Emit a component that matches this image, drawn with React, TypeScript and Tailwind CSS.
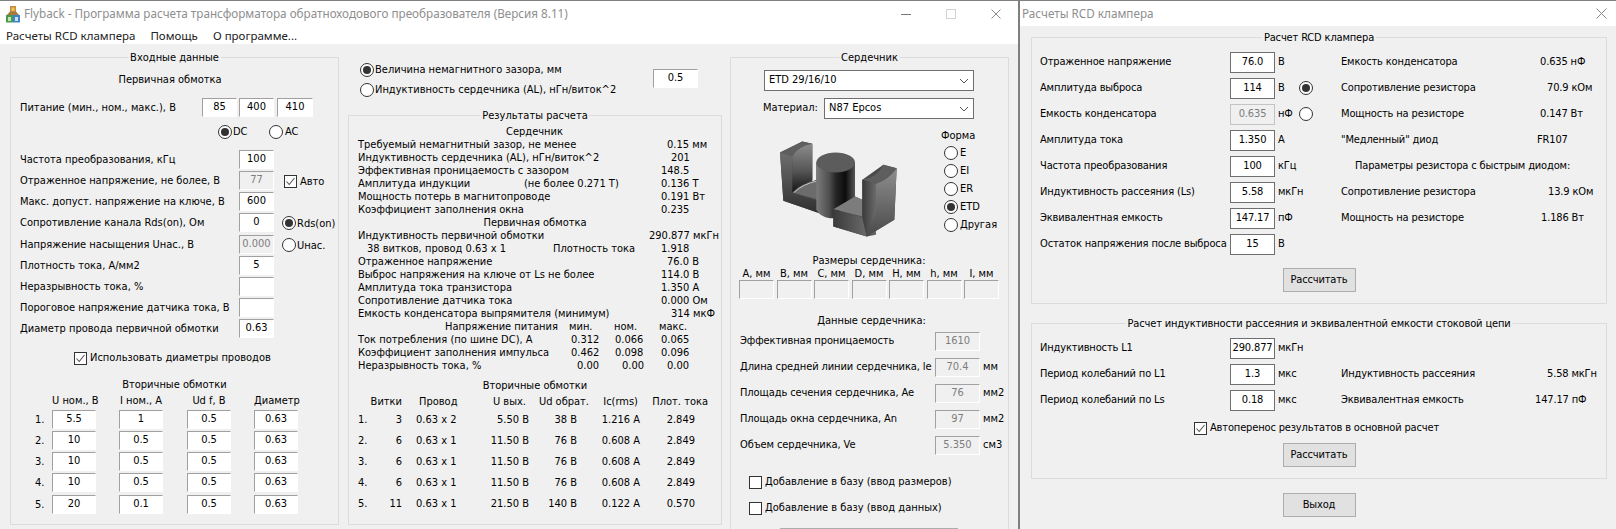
import { ReactNode } from "react";

const font = { fontFamily: '"DejaVu Sans Condensed", "Liberation Sans", Arial, sans-serif' };
const chromeFont = { fontFamily: '"Noto Sans", "Liberation Sans", Arial, sans-serif' };

const Field = ({ value = "", w = "w-[35px]", disabled = false, className = "" }: { value?: string; w?: string; disabled?: boolean; className?: string }) => (
  <div
    className={`${w} h-[19px] shrink-0 border-t border-l border-t-[#a0a0a0] border-l-[#a0a0a0] border-r border-b border-r-white border-b-white flex items-center justify-center ${
      disabled ? "bg-[#f0f0f0] text-[#7d7d7d]" : "bg-white"
    } ${className}`}
  >
    {value}
  </div>
);

const BoxField = ({ value, disabled = false }: { value: string; disabled?: boolean }) => (
  <div
    className={`w-[45px] h-[21px] shrink-0 border flex items-center justify-center overflow-hidden whitespace-nowrap ${
      disabled ? "border-[#c4c4c4] bg-[#f0f0f0] text-[#7d7d7d]" : "border-[#6f6f6f] bg-white"
    }`}
  >
    {value}
  </div>
);

const Radio = ({ on = false, className = "" }: { on?: boolean; className?: string }) => (
  <span className={`w-[14px] h-[14px] shrink-0 rounded-full border border-[#333] bg-white flex items-center justify-center ${className}`}>
    {on && <span className="w-[8px] h-[8px] rounded-full bg-[#333]" />}
  </span>
);

const Check = ({ on = false, className = "" }: { on?: boolean; className?: string }) => (
  <span className={`w-[13px] h-[13px] shrink-0 border border-[#333] bg-white flex items-center justify-center ${className}`}>
    {on && (
      <svg width="11" height="11" viewBox="0 0 11 11" fill="none" stroke="#555" strokeWidth="1.1">
        <path d="M1.5 5.5 L4.2 8.5 L9.5 2" />
      </svg>
    )}
  </span>
);

const Group = ({ title, className = "", children }: { title: string; className?: string; children: ReactNode }) => (
  <div className={`relative border border-[#dcdcdc] ${className}`}>
    <div className="absolute -top-[7px] left-1/2 -translate-x-1/2 bg-[#f0f0f0] px-[2px] whitespace-nowrap leading-[14px]">{title}</div>
    {children}
  </div>
);

const Combo = ({ value, w }: { value: string; w: string }) => (
  <div className={`${w} h-[21px] border border-[#6f6f6f] bg-white flex items-center justify-between pl-[4px] pr-[4px]`}>
    <span>{value}</span>
    <svg width="10" height="6" viewBox="0 0 10 6" fill="none" stroke="#555" strokeWidth="1">
      <path d="M1 1 L5 5 L9 1" />
    </svg>
  </div>
);

const Button = ({ label }: { label: string }) => (
  <div className="mx-auto w-[73px] h-[24px] bg-[#e1e1e1] border border-[#adadad] flex items-center justify-center">{label}</div>
);

const AppIcon = () => (
  <svg width="16" height="18" viewBox="0 0 16 18" className="shrink-0">
    <rect x="5" y="1" width="6" height="7" fill="#c98a3a" />
    <rect x="6.5" y="2.5" width="3" height="3.5" fill="#e8c46a" />
    <path d="M1 11 L5 6.5 H11 L15 11 Z" fill="#a8793f" />
    <rect x="1" y="10" width="7" height="7.5" fill="#4d9a4a" />
    <rect x="8" y="10" width="7" height="7.5" fill="#3f83c9" />
    <rect x="3" y="12" width="3" height="4" fill="#bfe6b5" />
    <rect x="10" y="12" width="3" height="4" fill="#c7e2f7" />
  </svg>
);

const CorePicture = () => (
  <svg width="150" height="117" viewBox="132 388 450 350">
    <defs>
      <linearGradient id="leftFront" x1="0" y1="0" x2="0" y2="1">
        <stop offset="0" stopColor="#6e6e6e" />
        <stop offset="0.6" stopColor="#484848" />
        <stop offset="1" stopColor="#303030" />
      </linearGradient>
      <linearGradient id="leftInner" x1="0" y1="0" x2="0" y2="1">
        <stop offset="0" stopColor="#8c8c8c" />
        <stop offset="0.55" stopColor="#565656" />
        <stop offset="1" stopColor="#141414" />
      </linearGradient>
      <linearGradient id="post" x1="0" y1="0" x2="1" y2="0">
        <stop offset="0" stopColor="#7c7c7c" />
        <stop offset="0.35" stopColor="#4c4c4c" />
        <stop offset="0.5" stopColor="#262626" />
        <stop offset="0.75" stopColor="#0c0c0c" />
        <stop offset="1" stopColor="#555" />
      </linearGradient>
      <linearGradient id="rightSide" x1="0" y1="0" x2="0" y2="1">
        <stop offset="0" stopColor="#8e8e8e" />
        <stop offset="1" stopColor="#4a4a4a" />
      </linearGradient>
      <linearGradient id="band" x1="0" y1="0" x2="1" y2="0">
        <stop offset="0" stopColor="#3a3a3a" />
        <stop offset="1" stopColor="#6a6a6a" />
      </linearGradient>
    </defs>
    <path d="M180 458 L247 425 L277 432 V545 L289 540 V488 H405 V590 L427 600 V540 L490 495 L530 505 L523 660 L440 710 L340 680 V655 L300 640 L190 603 Z" fill="#4a4a4a" />
    <path d="M180 458 L247 425 L277 432 Q232 440 217 470 Z" fill="#5e5e5e" />
    <path d="M180 458 L217 470 V578 L298 606 V640 L190 603 Z" fill="url(#leftFront)" />
    <path d="M217 470 Q232 440 277 432 V540 L217 578 Z" fill="url(#leftInner)" />
    <path d="M217 578 Q245 548 290 544 L296 600 Z" fill="#6c6c6c" />
    <path d="M222 578 Q250 552 290 544" fill="none" stroke="#c4c4c4" strokeWidth="3" />
    <path d="M289 488 V630 Q300 652 330 655 L340 655 V640 Q400 625 405 590 V488 Z" fill="url(#post)" />
    <ellipse cx="347" cy="488" rx="58" ry="30" fill="#5c5c5c" />
    <path d="M340 628 L405 590 L427 600 V650 Z" fill="#7c7c7c" />
    <path d="M340 628 L427 652 L440 710 L340 680 Z" fill="url(#band)" />
    <path d="M427 540 Q470 535 490 495 L530 505 Q505 540 468 552 Z" fill="#5e5e5e" />
    <path d="M427 540 L468 552 V705 L440 710 L427 652 Z" fill="url(#band)" />
    <path d="M468 552 Q505 540 530 505 L523 660 L440 710 L468 640 Z" fill="url(#rightSide)" />
  </svg>
);

const LeftRow = ({ label, value, disabled, children }: { label: string; value?: string; disabled?: boolean; children?: ReactNode }) => (
  <div className="h-[21px] flex pl-[9px]">
    <div className="w-[219px] h-[19px] pt-[2px] flex items-center whitespace-nowrap">{label}</div>
    <Field value={value} disabled={disabled} />
    {children}
  </div>
);

const secondaryInputs = [
  ["5.5", "1", "0.5", "0.63"],
  ["10", "0.5", "0.5", "0.63"],
  ["10", "0.5", "0.5", "0.63"],
  ["10", "0.5", "0.5", "0.63"],
  ["20", "0.1", "0.5", "0.63"],
];

const InputPanel = () => (
  <Group title="Входные данные" className="w-[329px] h-[468px] shrink-0">
    <div className="pt-[14px] h-[29px] text-center leading-[16px] pr-[9px]">Первичная обмотка</div>
    <div className="mt-[11px] h-[19px] flex pl-[9px]">
      <div className="w-[182px] pt-[2px] flex items-center whitespace-nowrap">Питание (мин., ном., макс.), В</div>
      <Field value="85" />
      <Field value="400" className="ml-[2px]" />
      <Field value="410" w="w-[36px]" className="ml-[3px]" />
    </div>
    <div className="mt-[8px] h-[14px] flex items-center pl-[207px]">
      <Radio on />
      <span className="ml-[1px] w-[36px]">DC</span>
      <Radio />
      <span className="ml-[2px]">AC</span>
    </div>
    <div className="mt-[11px]">
      <LeftRow label="Частота преобразования, кГц" value="100" />
      <LeftRow label="Отраженное напряжение, не более, В" value="77" disabled>
        <Check on className="ml-[10px] mt-[4px]" />
        <span className="ml-[3px] mt-[3px]">Авто</span>
      </LeftRow>
      <LeftRow label="Макс. допуст. напряжение на ключе, В" value="600" />
      <LeftRow label="Сопротивление канала Rds(on), Ом" value="0">
        <Radio on className="ml-[8px] mt-[3px]" />
        <span className="ml-[1px] mt-[3px]">Rds(on)</span>
      </LeftRow>
      <div className="h-[1px]" />
      <LeftRow label="Напряжение насыщения Uнас., В" value="0.000" disabled>
        <Radio className="ml-[8px] mt-[3px]" />
        <span className="ml-[1px] mt-[3px]">Uнас.</span>
      </LeftRow>
      <LeftRow label="Плотность тока, А/мм2" value="5" />
      <LeftRow label="Неразрывность тока, %" />
      <LeftRow label="Пороговое напряжение датчика тока, В" />
      <LeftRow label="Диаметр провода первичной обмотки" value="0.63" />
    </div>
    <div className="mt-[10px] h-[16px] flex items-center pl-[63px]">
      <Check on />
      <span className="ml-[3px]">Использовать диаметры проводов</span>
    </div>
    <div className="mt-[12px] h-[14px] leading-[14px] text-center">Вторичные обмотки</div>
    <div className="mt-[2px] h-[14px] leading-[14px] flex pl-[41px] text-center whitespace-nowrap">
      <span className="w-[44px]">U ном., В</span>
      <span className="ml-[23px] w-[44px]">I ном., А</span>
      <span className="ml-[24px] w-[44px]">Ud f, В</span>
      <span className="ml-[23px] w-[44px]">Диаметр</span>
    </div>
    <div className="mt-[2px]">
      {secondaryInputs.map((row, i) => (
        <div key={i} className={`h-[21px] flex items-start pl-[24px] ${i === 4 ? "mt-[1px]" : ""}`}>
          <span className="w-[17px] h-[19px] pt-[2px] flex items-center">{i + 1}.</span>
          <Field value={row[0]} w="w-[44px]" />
          <Field value={row[1]} w="w-[44px]" className="ml-[23px]" />
          <Field value={row[2]} w="w-[44px]" className="ml-[24px]" />
          <Field value={row[3]} w="w-[44px]" className="ml-[23px]" />
        </div>
      ))}
    </div>
  </Group>
);

const Line = ({ children, value, offset = "" }: { children: ReactNode; value?: string; offset?: string }) => (
  <div className="h-[13px] leading-[13px] flex whitespace-nowrap pl-[9px]">
    <div className="w-[291px] flex">{children}</div>
    {value && <span className={offset}>{value}</span>}
  </div>
);

const Heading = ({ children, className = "" }: { children: ReactNode; className?: string }) => (
  <div className={`h-[13px] leading-[13px] text-center whitespace-nowrap ${className}`}>{children}</div>
);

const Triple = ({ label, a, b, c, tight = false }: { label: string; a: string; b: string; c: string; tight?: boolean }) => (
  <div className="h-[13px] leading-[13px] flex whitespace-nowrap pl-[9px]">
    <span className="w-[213px]">{label}</span>
    <span className={tight ? "w-[44px]" : "w-[45px] pl-[6px]"}>{a}</span>
    <span className={tight ? "w-[46px]" : "w-[45px] pl-[6px]"}>{b}</span>
    <span className={tight ? "" : "pl-[6px]"}>{c}</span>
  </div>
);

const secondaryResults = [
  ["3", "0.63 x 2", "5.50 В", "38 В", "1.216 А", "2.849"],
  ["6", "0.63 x 1", "11.50 В", "76 В", "0.608 А", "2.849"],
  ["6", "0.63 x 1", "11.50 В", "76 В", "0.608 А", "2.849"],
  ["6", "0.63 x 1", "11.50 В", "76 В", "0.608 А", "2.849"],
  ["11", "0.63 x 1", "21.50 В", "140 В", "0.122 А", "0.570"],
];

const ResultsPanel = () => (
  <div className="w-[374px] shrink-0">
    <div className="h-[58px] flex pt-[6px]">
      <div className="w-[305px] pl-[12px] flex flex-col gap-[6px]">
        <div className="h-[14px] flex items-center"><Radio on /><span className="ml-[1px]">Величина немагнитного зазора, мм</span></div>
        <div className="h-[14px] flex items-center"><Radio /><span className="ml-[1px]">Индуктивность сердечника (AL), нГн/виток^2</span></div>
      </div>
      <Field value="0.5" w="w-[45px]" className="mt-[6px]" />
    </div>
    <Group title="Результаты расчета" className="h-[410px]">
      <div className="pt-[9px]">
        <Heading className="pr-[1px]">Сердечник</Heading>
        <Line value="0.15 мм" offset="ml-[18px]">Требуемый немагнитный зазор, не менее</Line>
        <Line value="201" offset="ml-[22px]">Индуктивность сердечника (AL), нГн/виток^2</Line>
        <Line value="148.5" offset="ml-[12px]">Эффективная проницаемость с зазором</Line>
        <Line value="0.136 Т" offset="ml-[12px]"><span className="w-[166px]">Амплитуда индукции</span><span>(не более 0.271 Т)</span></Line>
        <Line value="0.191 Вт" offset="ml-[12px]">Мощность потерь в магнитопроводе</Line>
        <Line value="0.235" offset="ml-[12px]">Коэффициент заполнения окна</Line>
        <Heading>Первичная обмотка</Heading>
        <Line value="290.877 мкГн">Индуктивность первичной обмотки</Line>
        <Line value="1.918" offset="ml-[12px]"><span className="pl-[9px] w-[195px]">38 витков, провод 0.63 x 1</span><span>Плотность тока</span></Line>
        <Line value="76.0 В" offset="ml-[18px]">Отраженное напряжение</Line>
        <Line value="114.0 В" offset="ml-[12px]">Выброс напряжения на ключе от Ls не более</Line>
        <Line value="1.350 А" offset="ml-[12px]">Амплитуда тока транзистора</Line>
        <Line value="0.000 Ом" offset="ml-[12px]">Сопротивление датчика тока</Line>
        <Line value="314 мкФ" offset="ml-[22px]">Емкость конденсатора выпрямителя (минимум)</Line>
        <div className="h-[13px] leading-[13px] flex whitespace-nowrap pl-[96px]">
          <span className="w-[124px]">Напряжение питания</span>
          <span className="w-[45px]">мин.</span>
          <span className="w-[45px]">ном.</span>
          <span>макс.</span>
        </div>
        <Triple tight label="Ток потребления (по шине DC), А" a="0.312" b="0.066" c="0.065" />
        <Triple tight label="Коэффициент заполнения импульса" a="0.462" b="0.098" c="0.096" />
        <Triple label="Неразрывность тока, %" a="0.00" b="0.00" c="0.00" />
      </div>
      <Heading className="mt-[7px]">Вторичные обмотки</Heading>
      <div className="mt-[3px] h-[13px] leading-[13px] flex whitespace-nowrap">
        <span className="w-[53px] text-right">Витки</span>
        <span className="ml-[17px] w-[60px]">Провод</span>
        <span className="w-[47px] text-right">U вых.</span>
        <span className="w-[63px] text-right">Ud обрат.</span>
        <span className="w-[49px] text-right">Ic(rms)</span>
        <span className="w-[70px] text-right">Плот. тока</span>
      </div>
      <div className="mt-[5px]">
        {secondaryResults.map((row, i) => (
          <div key={i} className="h-[21px] leading-[13px] flex whitespace-nowrap pl-[9px]">
            <span className="w-[20px]">{i + 1}.</span>
            <span className="w-[24px] text-right">{row[0]}</span>
            <span className="ml-[14px] w-[60px]">{row[1]}</span>
            <span className="w-[53px] text-right">{row[2]}</span>
            <span className="w-[48px] text-right">{row[3]}</span>
            <span className="w-[63px] text-right">{row[4]}</span>
            <span className="w-[55px] text-right">{row[5]}</span>
          </div>
        ))}
      </div>
    </Group>
  </div>
);

const shapes = [
  { label: "E" },
  { label: "EI" },
  { label: "ER" },
  { label: "ETD", on: true },
  { label: "Другая" },
];

const dimensions = ["A, мм", "B, мм", "C, мм", "D, мм", "H, мм", "h, мм", "I, мм"];

const coreData = [
  { label: "Эффективная проницаемость", value: "1610", unit: "" },
  { label: "Длина средней линии сердечника, le", value: "70.4", unit: "мм" },
  { label: "Площадь сечения сердечника, Ae", value: "76", unit: "мм2" },
  { label: "Площадь окна сердечника, An", value: "97", unit: "мм2" },
  { label: "Объем сердечника, Ve", value: "5.350", unit: "см3" },
];

const CorePanel = () => (
  <Group title="Сердечник" className="w-[279px] h-[500px] shrink-0">
    <div className="pt-[12px] pl-[33px]">
      <Combo value="ETD 29/16/10" w="w-[210px]" />
    </div>
    <div className="mt-[7px] flex items-center pl-[32px]">
      <span className="w-[61px] whitespace-nowrap">Материал:</span>
      <Combo value="N87 Epcos" w="w-[150px]" />
    </div>
    <div className="mt-[10px] h-[117px] flex pl-[33px]">
      <CorePicture />
      <div className="ml-[27px]">
        <div className="h-[14px] leading-[14px]">Форма</div>
        <div className="mt-[3px] flex flex-col gap-[4px] pl-[3px]">
          {shapes.map((s) => (
            <div key={s.label} className="h-[14px] flex items-center">
              <Radio on={s.on} />
              <span className="ml-[2px]">{s.label}</span>
            </div>
          ))}
        </div>
      </div>
    </div>
    <div className="mt-[8px] h-[14px] leading-[14px] text-center pr-[1px]">Размеры сердечника:</div>
    <div className="h-[13px] leading-[13px] flex pl-[8px] gap-[2.5px] -mt-[1px] text-center">
      {dimensions.map((d) => (
        <span key={d} className="w-[35px] whitespace-nowrap">{d}</span>
      ))}
    </div>
    <div className="flex pl-[8px] gap-[2.5px]">
      {dimensions.map((d) => (
        <Field key={d} disabled />
      ))}
    </div>
    <div className="mt-[15px] h-[14px] leading-[14px] text-center pl-[4px]">Данные сердечника:</div>
    <div className="mt-[4px] flex flex-col gap-[7px] pl-[9px]">
      {coreData.map((r) => (
        <div key={r.label} className="h-[19px] flex items-center whitespace-nowrap">
          <span className="w-[195px] tracking-[-0.1px]">{r.label}</span>
          <Field value={r.value} w="w-[45px]" disabled />
          <span className="ml-[3px]">{r.unit}</span>
        </div>
      ))}
    </div>
    <div className="mt-[20px] h-[14px] flex items-center pl-[18px]">
      <Check />
      <span className="ml-[3px]">Добавление в базу (ввод размеров)</span>
    </div>
    <div className="mt-[12px] h-[14px] flex items-center pl-[18px]">
      <Check />
      <span className="ml-[3px]">Добавление в базу (ввод данных)</span>
    </div>
    <div className="mt-[13px] ml-[49px] w-[178px] h-[24px] bg-[#e1e1e1] border border-[#adadad]" />
  </Group>
);

const MainWindow = () => (
  <div className="w-[1018px] shrink-0 flex flex-col">
    <div className="h-[27px] bg-white border-t border-[#808080] flex items-center pl-[5px]">
      <AppIcon />
      <span style={chromeFont} className="ml-[3px] text-[#8e8e8e] text-[11.7px] whitespace-nowrap">
        Flyback - Программа расчета трансформатора обратноходового преобразователя (Версия 8.11)
      </span>
      <svg width="100" height="12" viewBox="0 0 100 12" className="ml-auto mr-[17px] shrink-0" fill="none">
        <path d="M0 6.5 H10" stroke="#777" />
        <rect x="45.5" y="1.5" width="9" height="9" stroke="#d2d2d2" />
        <path d="M90.5 1.5 L99.5 10.5 M99.5 1.5 L90.5 10.5" stroke="#888" />
      </svg>
    </div>
    <div style={chromeFont} className="h-[17px] bg-white flex items-center pl-[6px] gap-[15px] text-[#222] text-[11.5px]">
      <span>Расчеты RCD клампера</span>
      <span>Помощь</span>
      <span>О программе...</span>
    </div>
    <div className="flex-1 flex pt-[13px] pl-[10px] gap-[9px] overflow-hidden">
      <InputPanel />
      <ResultsPanel />
      <div className="-ml-[1px]"><CorePanel /></div>
    </div>
  </div>
);

const ClampRow = ({ label, value, unit, disabled, radio, rightLabel, rightValue, rightClass = "", offset = "" }: {
  label: string; value: string; unit: string; disabled?: boolean; radio?: "on" | "off"; rightLabel?: string; rightValue?: string; rightClass?: string; offset?: string;
}) => (
  <div className="h-[26px] flex items-center whitespace-nowrap pl-[8px]">
    <span className="w-[190px]">{label}</span>
    <BoxField value={value} disabled={disabled} />
    <span className="w-[24px] pl-[3px]">{unit}</span>
    <span className="w-[42px]">{radio && <Radio on={radio === "on"} />}</span>
    <span className={`w-[194px] ${rightClass}`}>{rightLabel}</span>
    {rightValue && <span className={offset}>{rightValue}</span>}
  </div>
);

const RcdWindow = () => (
  <div className="flex-1 flex flex-col border-l-2 border-[#7f7f7f]">
    <div className="h-[26px] bg-white border-t border-[#808080] flex items-center pl-[2px] pr-[9px] justify-between">
      <span style={chromeFont} className="text-[#8e8e8e] text-[11.7px]">Расчеты RCD клампера</span>
      <svg width="11" height="11" viewBox="0 0 11 11" fill="none" stroke="#888">
        <path d="M0.5 0.5 L10.5 10.5 M10.5 0.5 L0.5 10.5" />
      </svg>
    </div>
    <div className="flex-1 pt-[11px] pl-[11px] pr-[9px] tracking-[-0.15px]">
      <Group title="Расчет RCD клампера">
        <div className="pt-[11px] pb-[11px]">
          <ClampRow label="Отраженное напряжение" value="76.0" unit="В" rightLabel="Емкость конденсатора" rightValue="0.635 нФ" offset="ml-[5px]" />
          <ClampRow label="Амплитуда выброса" value="114" unit="В" radio="on" rightLabel="Сопротивление резистора" rightValue="70.9 кОм" offset="ml-[12px]" />
          <ClampRow label="Емкость конденсатора" value="0.635" unit="нФ" disabled radio="off" rightLabel="Мощность на резисторе" rightValue="0.147 Вт" offset="ml-[5px]" />
          <ClampRow label="Амплитуда тока" value="1.350" unit="А" rightLabel={'"Медленный" диод'} rightValue="FR107" offset="ml-[2px]" />
          <ClampRow label="Частота преобразования" value="100" unit="кГц" rightLabel="Параметры резистора с быстрым диодом:" rightClass="pl-[14px]" />
          <ClampRow label="Индуктивность рассеяния (Ls)" value="5.58" unit="мкГн" rightLabel="Сопротивление резистора" rightValue="13.9 кОм" offset="ml-[13px]" />
          <ClampRow label="Эквивалентная емкость" value="147.17" unit="пФ" rightLabel="Мощность на резисторе" rightValue="1.186 Вт" offset="ml-[6px]" />
          <ClampRow label="Остаток напряжения после выброса" value="15" unit="В" />
          <div className="mt-[11px]"><Button label="Рассчитать" /></div>
        </div>
      </Group>
      <Group title="Расчет индуктивности рассеяния и эквивалентной емкости стоковой цепи" className="mt-[19px]">
        <div className="pt-[11px] pb-[11px]">
          <ClampRow label="Индуктивность L1" value="290.877" unit="мкГн" />
          <ClampRow label="Период колебаний по L1" value="1.3" unit="мкс" rightLabel="Индуктивность рассеяния" rightValue="5.58 мкГн" offset="ml-[12px]" />
          <ClampRow label="Период колебаний по Ls" value="0.18" unit="мкс" rightLabel="Эквивалентная емкость" rightValue="147.17 пФ" />
          <div className="mt-[5px] h-[20px] flex items-center pl-[162px]">
            <Check on />
            <span className="ml-[3px]">Автоперенос результатов в основной расчет</span>
          </div>
          <div className="mt-[5px]"><Button label="Рассчитать" /></div>
        </div>
      </Group>
      <div className="mt-[14px]"><Button label="Выход" /></div>
    </div>
  </div>
);

export default function App() {
  return (
    <div style={font} className="w-[1616px] h-[529px] overflow-hidden flex bg-[#f0f0f0] text-[11px] text-black">
      <MainWindow />
      <RcdWindow />
    </div>
  );
}
